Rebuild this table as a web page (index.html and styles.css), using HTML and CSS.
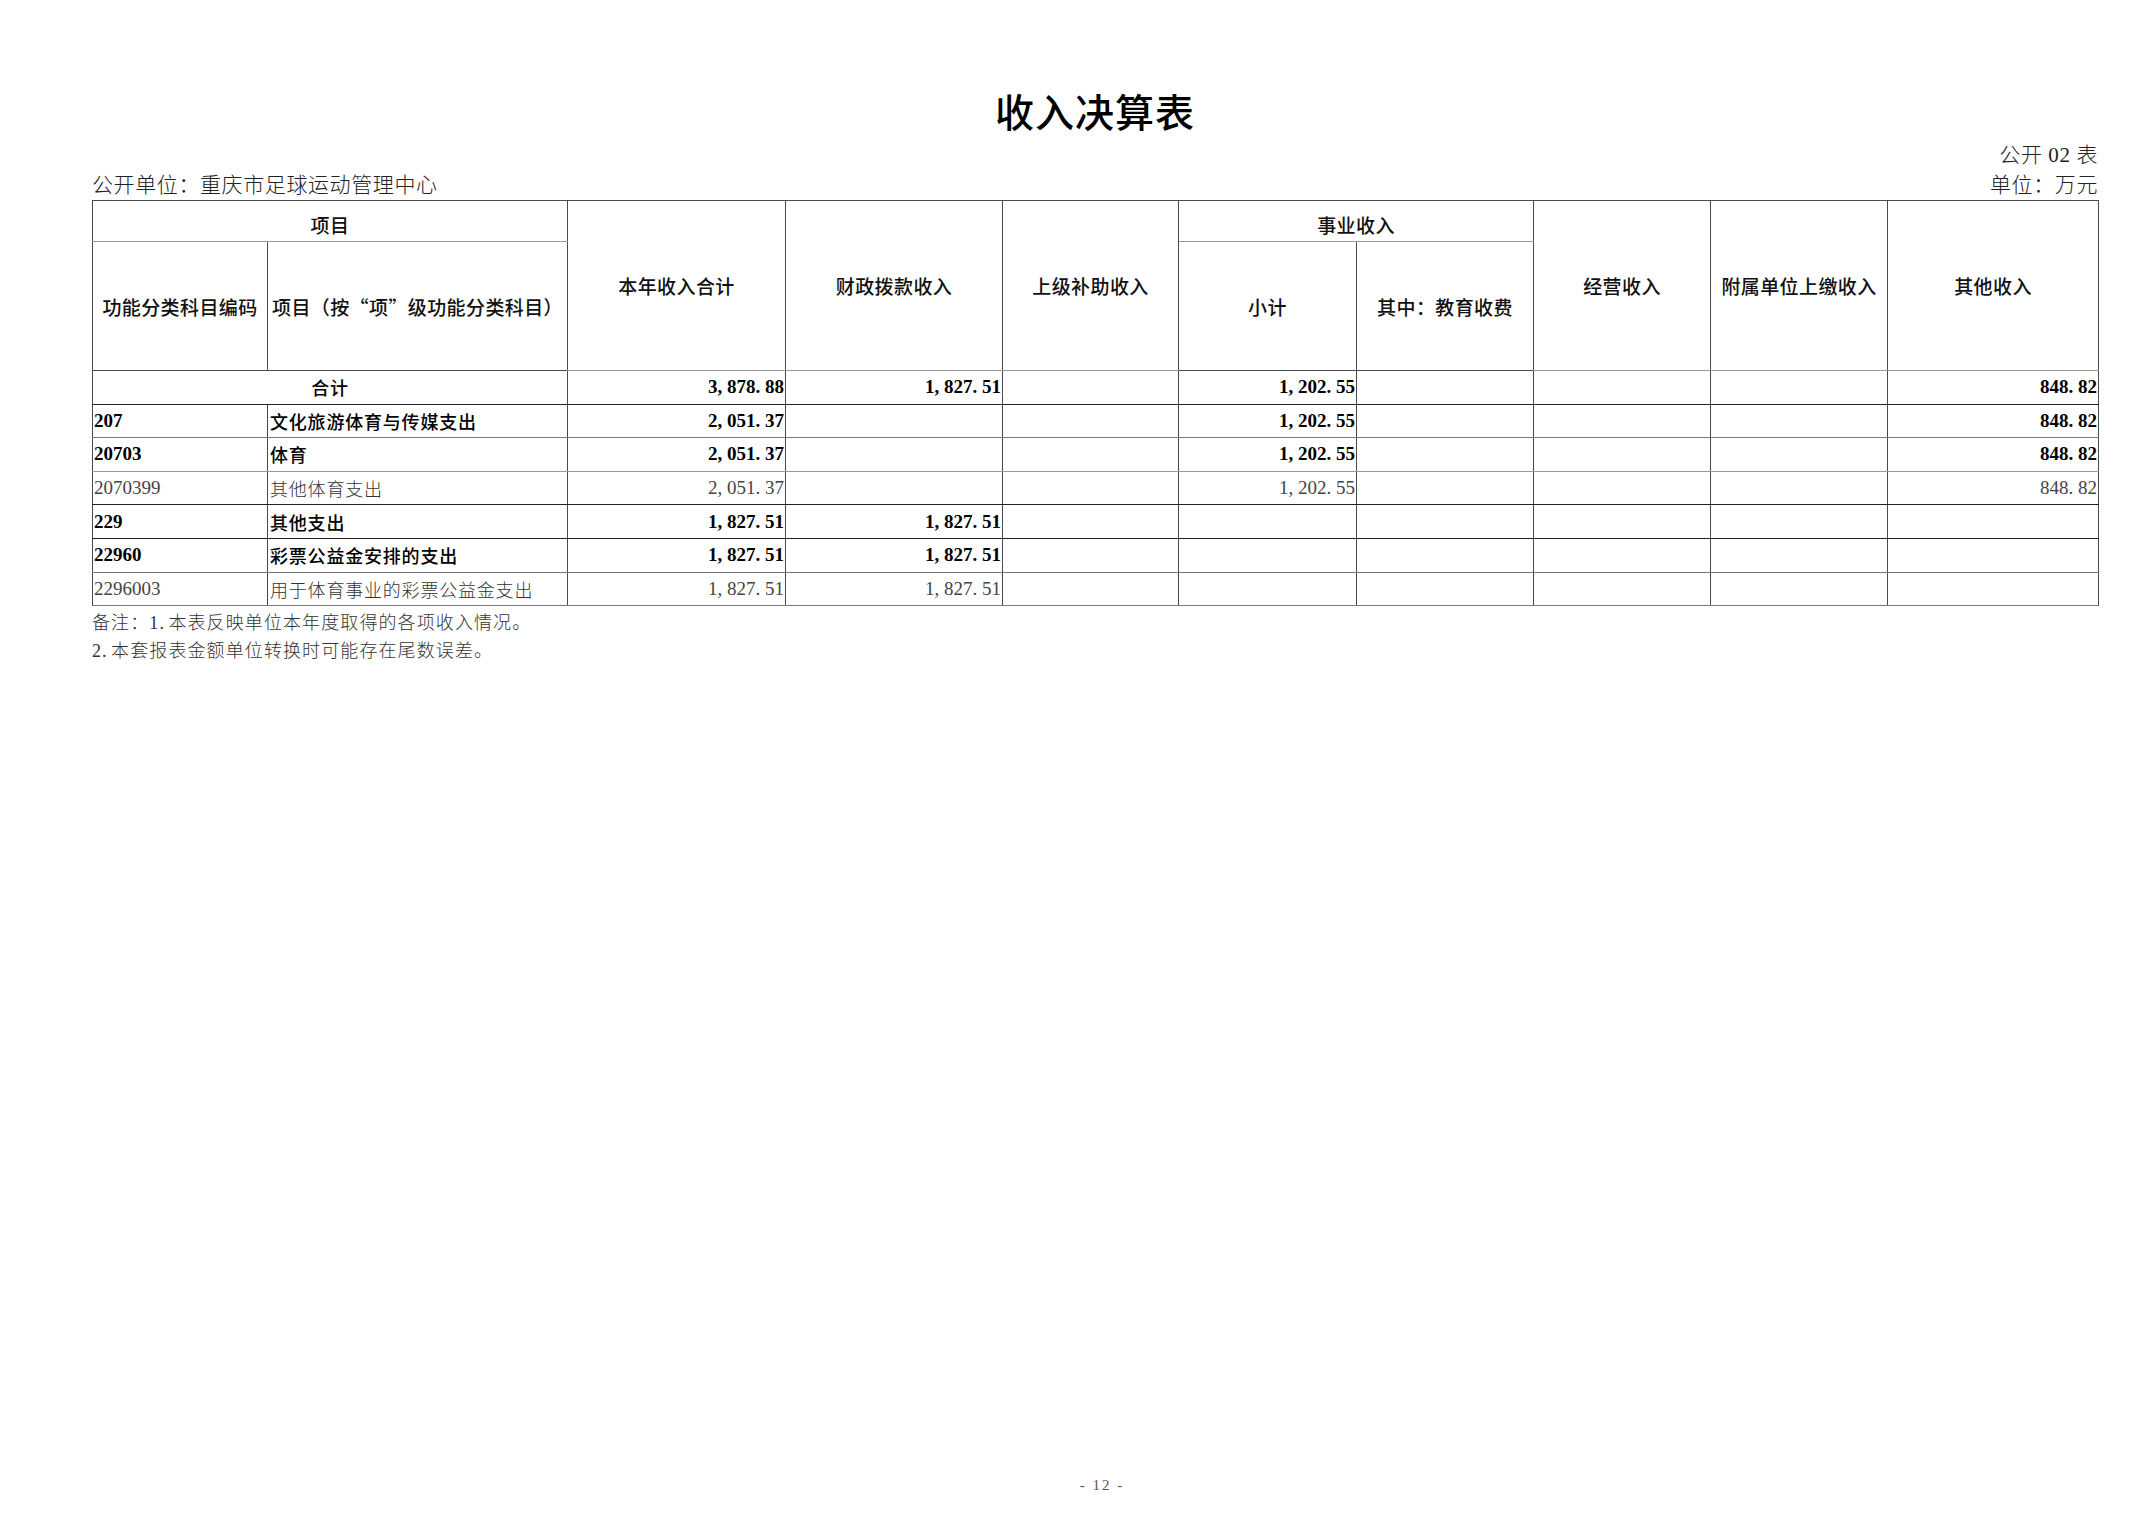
FILE: index.html
```html
<!DOCTYPE html>
<html lang="zh-CN">
<head>
<meta charset="utf-8">
<title>收入决算表</title>
<link rel="stylesheet" href="styles.css">
</head>
<body>
<div class="page">
  <div class="sheet">
    <h1 class="title">收入决算表</h1>
    <div class="meta meta-right">公开 02 表</div>
    <div class="meta meta-row">
      <span>公开单位：重庆市足球运动管理中心</span>
      <span>单位：万元</span>
    </div>
    <table class="grid">
      <colgroup>
        <col class="c1"><col class="c2"><col class="c3"><col class="c4"><col class="c5">
        <col class="c6"><col class="c7"><col class="c8"><col class="c9"><col class="c10">
      </colgroup>
      <thead>
        <tr class="h1 lg">
          <th colspan="2" class="th-top">项目</th>
          <th rowspan="2">本年收入合计</th>
          <th rowspan="2">财政拨款收入</th>
          <th rowspan="2">上级补助收入</th>
          <th colspan="2" class="th-top">事业收入</th>
          <th rowspan="2">经营收入</th>
          <th rowspan="2">附属单位上缴收入</th>
          <th rowspan="2">其他收入</th>
        </tr>
        <tr class="h2">
          <th>功能分类科目编码</th>
          <th>项目（按“项”级功能分类科目）</th>
          <th>小计</th>
          <th>其中：教育收费</th>
        </tr>
      </thead>
      <tbody>
        <tr class="row b dk">
          <td colspan="2" class="tc">合计</td>
          <td class="num">3<span class="pc">,</span>878<span class="pc">.</span>88</td>
          <td class="num">1<span class="pc">,</span>827<span class="pc">.</span>51</td>
          <td></td>
          <td class="num">1<span class="pc">,</span>202<span class="pc">.</span>55</td>
          <td></td><td></td><td></td>
          <td class="num">848<span class="pc">.</span>82</td>
        </tr>
        <tr class="row b gy">
          <td class="code">207</td>
          <td class="name">文化旅游体育与传媒支出</td>
          <td class="num">2<span class="pc">,</span>051<span class="pc">.</span>37</td>
          <td></td><td></td>
          <td class="num">1<span class="pc">,</span>202<span class="pc">.</span>55</td>
          <td></td><td></td><td></td>
          <td class="num">848<span class="pc">.</span>82</td>
        </tr>
        <tr class="row b lg">
          <td class="code">20703</td>
          <td class="name">体育</td>
          <td class="num">2<span class="pc">,</span>051<span class="pc">.</span>37</td>
          <td></td><td></td>
          <td class="num">1<span class="pc">,</span>202<span class="pc">.</span>55</td>
          <td></td><td></td><td></td>
          <td class="num">848<span class="pc">.</span>82</td>
        </tr>
        <tr class="row r dk">
          <td class="code">2070399</td>
          <td class="name">其他体育支出</td>
          <td class="num">2<span class="pc">,</span>051<span class="pc">.</span>37</td>
          <td></td><td></td>
          <td class="num">1<span class="pc">,</span>202<span class="pc">.</span>55</td>
          <td></td><td></td><td></td>
          <td class="num">848<span class="pc">.</span>82</td>
        </tr>
        <tr class="row b dk">
          <td class="code">229</td>
          <td class="name">其他支出</td>
          <td class="num">1<span class="pc">,</span>827<span class="pc">.</span>51</td>
          <td class="num">1<span class="pc">,</span>827<span class="pc">.</span>51</td>
          <td></td><td></td><td></td><td></td><td></td><td></td>
        </tr>
        <tr class="row b gy">
          <td class="code">22960</td>
          <td class="name">彩票公益金安排的支出</td>
          <td class="num">1<span class="pc">,</span>827<span class="pc">.</span>51</td>
          <td class="num">1<span class="pc">,</span>827<span class="pc">.</span>51</td>
          <td></td><td></td><td></td><td></td><td></td><td></td>
        </tr>
        <tr class="row r gy">
          <td class="code">2296003</td>
          <td class="name">用于体育事业的彩票公益金支出</td>
          <td class="num">1<span class="pc">,</span>827<span class="pc">.</span>51</td>
          <td class="num">1<span class="pc">,</span>827<span class="pc">.</span>51</td>
          <td></td><td></td><td></td><td></td><td></td><td></td>
        </tr>
      </tbody>
    </table>
    <div class="notes">
      <p>备注：1<span class="pc">.</span>本表反映单位本年度取得的各项收入情况。</p>
      <p>2<span class="pc">.</span>本套报表金额单位转换时可能存在尾数误差。</p>
    </div>
  </div>
  <div class="footer">- 12 -</div>
</div>
</body>
</html>
```

FILE: styles.css
```css
html, body {
  margin: 0;
  padding: 0;
  background: #ffffff;
}

.page {
  height: 1520px;
  display: flex;
  flex-direction: column;
  box-sizing: border-box;
  padding: 86px 0 25px 92px;
  overflow: hidden;
}

.sheet {
  width: 2006px;
}

.title {
  margin: 0;
  height: 48px;
  line-height: 48px;
  text-align: center;
  font-family: "Noto Sans CJK SC", sans-serif;
  font-weight: 500;
  font-size: 39px;
  letter-spacing: 1px;
  color: #000;
}

.meta {
  font-family: "Liberation Serif", "Noto Sans CJK SC", serif;
  font-size: 21px;
  letter-spacing: 0.6px;
  line-height: 30px;
  height: 30px;
  color: #222;
  font-weight: 300;
}

.meta-right {
  margin-top: 6px;
  text-align: right;
}

.meta-row {
  display: flex;
  justify-content: space-between;
}

.grid {
  border-collapse: collapse;
  table-layout: fixed;
  width: 2006px;
}

.c1 { width: 175px; }
.c2 { width: 300px; }
.c3 { width: 218px; }
.c4 { width: 217px; }
.c5 { width: 176px; }
.c6 { width: 178px; }
.c7 { width: 177px; }
.c8 { width: 177px; }
.c9 { width: 177px; }
.c10 { width: 211px; }

.grid th,
.grid td {
  border: 1px solid #4a4a4a;
  padding: 0;
  overflow: hidden;
  white-space: nowrap;
}

.grid th {
  font-family: "Noto Sans CJK SC", sans-serif;
  font-weight: 500;
  font-size: 19px;
  letter-spacing: 0.4px;
  color: #111;
  text-align: center;
  vertical-align: middle;
}

.grid .th-top {
  padding-top: 6px;
}

.h1 { height: 41px; }
.h2 { height: 129px; }
.row { height: 33.6px; }

.lg > th,
.lg > td { border-bottom-color: #9a9a9a; }
.gy > td { border-bottom-color: #777; }
.dk > td { border-bottom-color: #222; }

.grid td {
  vertical-align: middle;
  font-size: 18px;
  line-height: 24px;
}

.code {
  font-family: "Liberation Serif", serif;
  font-size: 19px !important;
  padding-left: 1px !important;
}

.name {
  font-family: "Noto Sans CJK SC", sans-serif;
  letter-spacing: 0.8px;
  padding-left: 2px !important;
}

.num {
  font-family: "Liberation Serif", serif;
  font-size: 19px !important;
  text-align: right;
  padding-right: 1px !important;
}

.pc {
  letter-spacing: 0.25em;
}

.tc {
  text-align: center;
  font-family: "Noto Sans CJK SC", sans-serif;
  letter-spacing: 0.8px;
}

.b td {
  font-weight: 700;
  color: #000;
}

.b .name,
.b .tc {
  font-weight: 500;
}

.r td {
  font-weight: 400;
  color: #444;
}

.r .name {
  font-weight: 300;
  color: #333;
}

.notes {
  margin-top: 3px;
  font-family: "Liberation Serif", "Noto Sans CJK SC", serif;
  font-size: 18px;
  letter-spacing: 1.1px;
  color: #333;
  font-weight: 300;
}

.notes p {
  margin: 0;
  line-height: 28px;
}

.footer {
  margin-top: auto;
  width: 2006px;
  box-sizing: border-box;
  padding-left: 14px;
  text-align: center;
  font-family: "Liberation Serif", serif;
  font-size: 15px;
  line-height: 20px;
  color: #555;
  letter-spacing: 2px;
}
```
